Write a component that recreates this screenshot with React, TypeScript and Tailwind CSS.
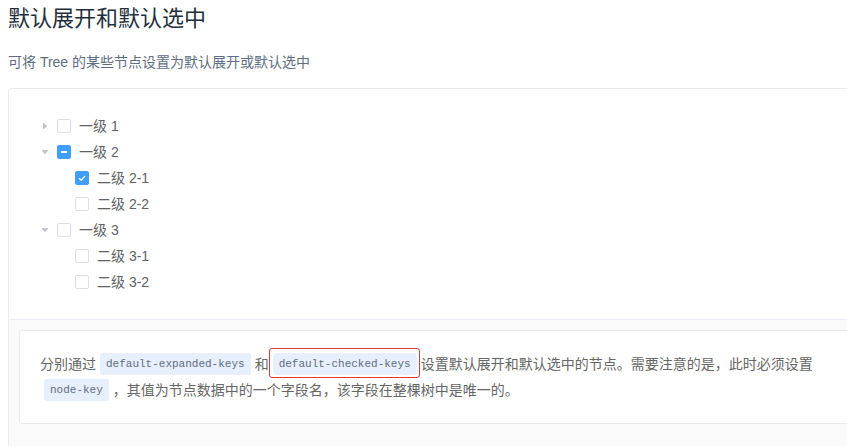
import React from 'react';

type Node = {
  label: string;
  level: number;
  arrow?: 'right' | 'down';
  state?: 'none' | 'checked' | 'half';
};

const nodes: Node[] = [
  { label: '一级 1', level: 0, arrow: 'right' },
  { label: '一级 2', level: 0, arrow: 'down', state: 'half' },
  { label: '二级 2-1', level: 1, state: 'checked' },
  { label: '二级 2-2', level: 1 },
  { label: '一级 3', level: 0, arrow: 'down' },
  { label: '二级 3-1', level: 1 },
  { label: '二级 3-2', level: 1 },
];

const Checkbox: React.FC<{ state?: Node['state'] }> = ({ state = 'none' }) => {
  if (state === 'checked') {
    return (
      <span className="w-[14px] h-[14px] rounded-[2px] bg-[#409eff] border border-[#409eff] flex items-center justify-center shrink-0">
        <svg width="10" height="10" viewBox="0 0 10 10">
          <path d="M2 5.2 L4.2 7.2 L8 3" fill="none" stroke="#fff" strokeWidth="1.2" />
        </svg>
      </span>
    );
  }
  if (state === 'half') {
    return (
      <span className="w-[14px] h-[14px] rounded-[2px] bg-[#409eff] border border-[#409eff] flex items-center justify-center shrink-0">
        <span className="w-[6px] h-[2px] bg-white" />
      </span>
    );
  }
  return <span className="w-[14px] h-[14px] rounded-[2px] bg-white border border-[#dcdfe6] shrink-0" />;
};

const Caret: React.FC<{ dir?: Node['arrow'] }> = ({ dir }) => (
  <span className="w-[24px] h-[24px] flex items-center justify-center shrink-0">
    {dir && (
      <svg width="12" height="12" viewBox="0 0 12 12" className={dir === 'down' ? 'rotate-90' : ''}>
        <polygon points="4,2.5 8.5,6 4,9.5" fill="#c0c4cc" />
      </svg>
    )}
  </span>
);

const Code: React.FC<{ children: React.ReactNode; marked?: boolean }> = ({ children, marked }) => (
  <code
    className="relative inline-block h-[22px] leading-[22px] px-[6px] mx-[4px] rounded-[3px] bg-[#e6effb] text-[#5e6d82] text-[11px] align-middle -translate-y-[1px]"
    style={{ fontFamily: '"Liberation Mono", monospace' }}
  >
    {children}
    {marked && (
      <span className="absolute left-[-4px] right-[-3px] top-[-5px] bottom-[-3px] border border-[#e53935] rounded-[3px]" />
    )}
  </code>
);

export default function App() {
  return (
    <div
      className="w-[847px] h-[446px] overflow-hidden bg-white"
      style={{ fontFamily: '"Liberation Sans", "Noto Sans CJK SC", sans-serif' }}
    >
      <div className="w-[920px] pl-2">
        <h3 className="mt-[2px] text-[22px] leading-[33px] font-normal text-[#1f2f3d]">默认展开和默认选中</h3>
        <p className="mt-[17px] text-[14px] leading-[21px] text-[#5e6d82]">可将 Tree 的某些节点设置为默认展开或默认选中</p>

        <div className="mt-[15px] border border-[#ebebeb] rounded-[3px]">
          <div className="p-6">
            {nodes.map((n) => (
              <div
                key={n.label}
                className={`h-[26px] flex items-center text-[14px] text-[#606266] ${n.level === 1 ? 'pl-[18px]' : ''}`}
              >
                <Caret dir={n.arrow} />
                <Checkbox state={n.state} />
                <span className="ml-2">{n.label}</span>
              </div>
            ))}
          </div>

          <div className="bg-[#fafafa] border-t border-[#eaeefb] p-[10px] pb-10">
            <div className="bg-white border border-[#ebebeb] rounded-[3px] p-5">
              <p className="text-[14px] leading-[26px] text-[#666] whitespace-nowrap">
                分别通过<Code>default-expanded-keys</Code>和<Code marked>default-checked-keys</Code>设置默认展开和默认选中的节点。需要注意的是，此时必须设置
                <br />
                <Code>node-key</Code>，其值为节点数据中的一个字段名，该字段在整棵树中是唯一的。
              </p>
            </div>
          </div>
        </div>
      </div>
    </div>
  );
}
